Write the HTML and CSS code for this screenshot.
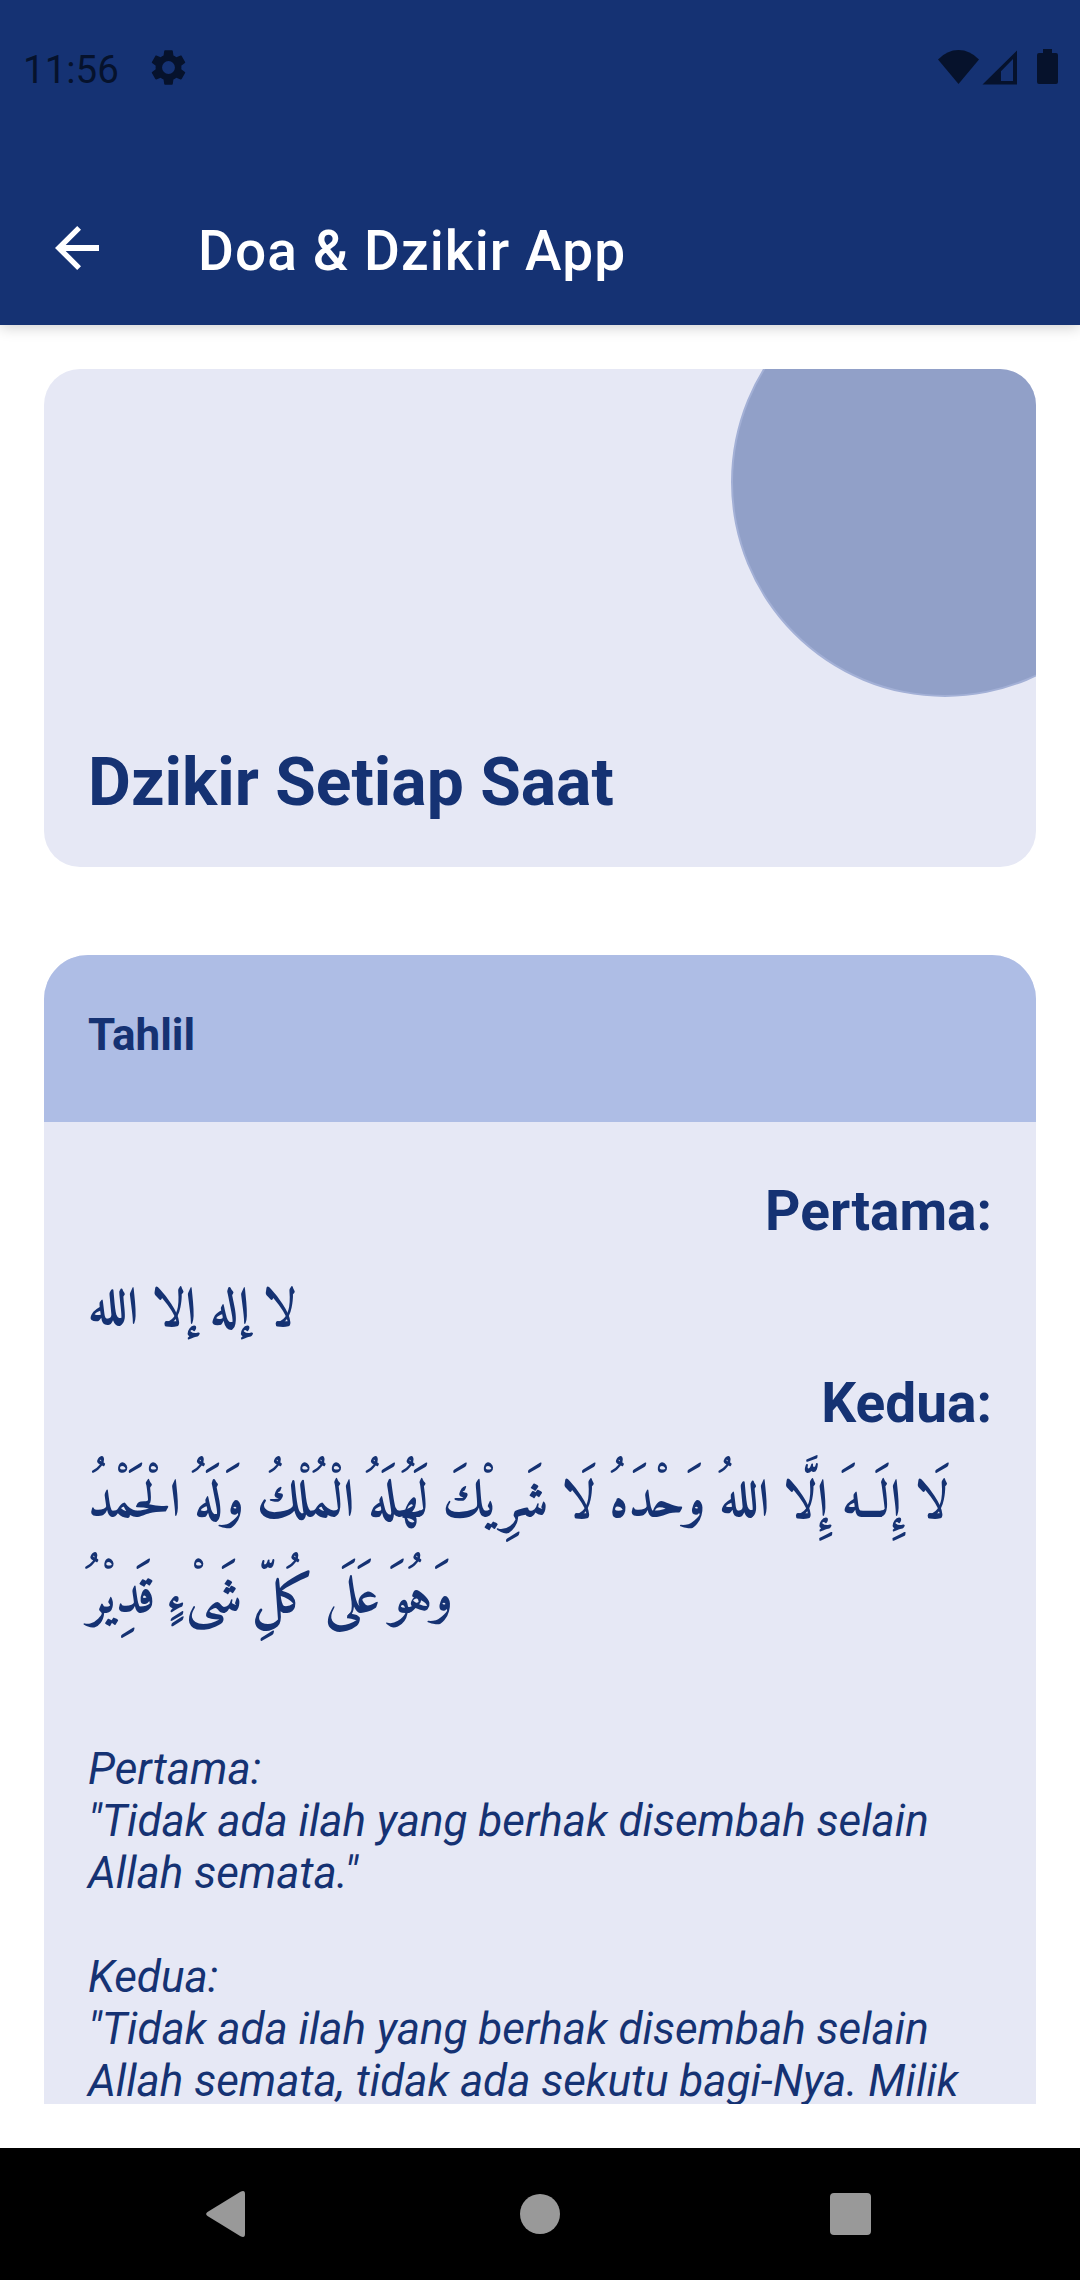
FILE: index.html
```html
<!DOCTYPE html>
<html lang="id">
<head>
<meta charset="utf-8">
<title>Doa &amp; Dzikir App</title>
<link rel="stylesheet" href="styles.css">
</head>
<body>
<div class="screen">
  <header class="top">
    <div class="status">
      <span class="clock">11:56</span>
      <svg class="gear" width="43" height="43" viewBox="0 0 24 24"><path d="M19.14 12.94c.04-.3.06-.61.06-.94s-.02-.64-.07-.94l2.03-1.58c.18-.14.23-.41.12-.61l-1.92-3.32c-.12-.22-.37-.29-.59-.22l-2.39.96c-.5-.38-1.03-.7-1.62-.94l-.36-2.54c-.04-.24-.24-.41-.48-.41h-3.84c-.24 0-.43.17-.47.41l-.36 2.54c-.59.24-1.13.57-1.62.94l-2.39-.96c-.22-.08-.47 0-.59.22L2.74 8.87c-.12.21-.08.47.12.61l2.03 1.58c-.05.3-.09.63-.09.94s.02.64.07.94l-2.03 1.58c-.18.14-.23.41-.12.61l1.92 3.32c.12.22.37.29.59.22l2.39-.96c.5.38 1.03.7 1.62.94l.36 2.54c.05.24.24.41.48.41h3.84c.24 0 .44-.17.47-.41l.36-2.54c.59-.24 1.13-.56 1.62-.94l2.39.96c.22.08.47 0 .59-.22l1.92-3.32c.12-.22.07-.47-.12-.61zM12 15.6A3.6 3.6 0 1 1 12 8.4a3.6 3.6 0 0 1 0 7.2z"/></svg>
      <svg class="signals" width="120" height="36" viewBox="0 0 120 36"><path d="M0 10.5Q9 1 20.5 1T41 10.5L20.5 35Z"/><path fill-rule="evenodd" d="M44.5 35.5L79 1.5V35.5ZM63 22.3V32H75V10Z"/><path d="M99 6Q99 4 101 4H105V0H114V4H118Q120 4 120 6V33Q120 35 118 35H101Q99 35 99 33Z"/></svg>
    </div>
    <div class="appbar">
      <svg class="back" width="44" height="44" viewBox="0 0 44 44"><path d="M44 19.1H10.7L26 3.8 22.2 0 0 22 22.2 44 26 40.2 10.7 24.9H44Z"/></svg>
      <h1>Doa &amp; Dzikir App</h1>
    </div>
  </header>
  <main class="content">
    <section class="hero"><span class="circle"></span><h2>Dzikir Setiap Saat</h2></section>
    <article class="card">
      <h3>Tahlil</h3>
      <div class="body">
        <p class="label">Pertama:</p>
        <p class="arabic short">لا إله إلا الل&zwj;ه</p>
        <p class="label">Kedua:</p>
        <p class="arabic long">لَا إِلَــهَ إِلَّا الل&zwj;هُ وَحْدَهُ لَا شَرِيْكَ لَ&zwj;هُ&zwj;لَهُ الْ&zwj;مُلْكُ وَلَهُ الْحَ&zwj;مْدُ</p>
        <p class="arabic last">وَهُوَ عَلَى كُلِّ شَىْءٍ قَدِيْ&zwj;رُ</p>
        <p class="meaning">Pertama:<br>"Tidak ada ilah yang berhak disembah selain<br>Allah semata."<br><br>Kedua:<br>"Tidak ada ilah yang berhak disembah selain<br>Allah semata, tidak ada sekutu bagi-Nya. Milik</p>
      </div>
    </article>
  </main>
  <nav class="nav">
    <svg width="39" height="46" viewBox="0 0 39 46"><path d="M34.5 .8Q39-1.500 39 3V43Q39 47.500 34.500 45.200L1.500 25Q-1.200 23 1.500 21Z"/></svg>
    <svg class="home" width="40" height="40" viewBox="0 0 40 40"><circle cx="20" cy="20" r="20"/></svg>
    <svg width="41" height="42" viewBox="0 0 41 42"><rect width="41" height="42" rx="4"/></svg>
  </nav>
</div>
</body>
</html>
```
FILE: styles.css
```css
* { box-sizing: border-box; margin: 0; padding: 0; }
body { font-family: Roboto, sans-serif; background: #fff; color: #153273; }
.screen { width: 1080px; height: 2280px; display: flex; flex-direction: column; overflow: hidden; }
.top { height: 325px; background: #153273; box-shadow: 0 2px 14px rgba(0,0,0,.2); flex: none; }
.status { height: 135px; display: flex; align-items: center; padding: 0 22px 0 23px; color: #06122c; fill: #06122c; }
.clock { font-size: 38.5px; margin-top: 3px; width: 96px; white-space: nowrap; }
.gear { margin-left: 28px; }
.signals { margin-left: auto; margin-bottom: 2px; }
.appbar { display: flex; align-items: center; height: 190px; padding: 37px 0 0 55px; }
.back { fill: #fff; margin-bottom: 1px; }
h1 { font-size: 55px; font-weight: 500; color: #fff; margin: 4px 0 0 99px; letter-spacing: 1.1px; }
.content { flex: 1; min-height: 0; padding: 44px; display: flex; flex-direction: column; gap: 88px; }
.hero { position: relative; flex: none; height: 498px; background: #e6e8f5; border-radius: 36px; overflow: hidden; display: flex; align-items: flex-end; padding: 0 44px 45px; }
.circle { position: absolute; left: 687px; top: -102px; width: 428px; height: 430px; border-radius: 50%; background: #91a0c8; border: 2px solid #a3b0d6; }
h2 { font-size: 66px; line-height: 78px; }
.card { flex: 1; min-height: 0; overflow: hidden; border-radius: 44px 44px 0 0; background: #e6e8f5; }
h3 { height: 167px; background: #aebde5; font-size: 44px; line-height: 52px; padding: 54px 44px; }
.body { padding: 41px 44px 0; }
.label { text-align: right; font-size: 55px; line-height: 96px; font-weight: 700; }
.arabic { height: 96px; direction: rtl; text-align: left; white-space: nowrap; font-family: Amiri, "Noto Naskh Arabic", "DejaVu Sans", sans-serif; font-weight: 700; font-size: 52px; line-height: 106px; }
.short { word-spacing: -1.7px; }
.long { word-spacing: -1.3px; }
.last { word-spacing: -4.5px; }
.meaning { font-style: italic; font-size: 44px; line-height: 52px; margin-top: 100px; }
.nav { flex: none; height: 132px; background: #000; fill: #999; display: flex; align-items: center; justify-content: space-between; padding: 0 209px 0 206px; }
.home { margin-left: 4px; }
```
